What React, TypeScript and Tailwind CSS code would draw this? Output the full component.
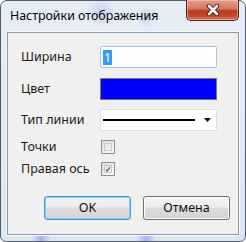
function CloseButton() {
  return (
    <div className="flex h-[21px] w-[53px] shrink-0 items-center justify-center rounded-b-[5px] border border-t-0 border-[#5e2318] bg-[linear-gradient(to_bottom,#e39c8b_0%,#d57a66_42%,#bb3b22_55%,#c24a30_80%,#d5826c_100%)] shadow-[inset_0_0_0_1px_rgba(255,220,210,0.45)]">
      <svg width="16" height="14" viewBox="0 0 16 14">
        <path d="M4 3 L12 11 M12 3 L4 11" stroke="#431510" strokeWidth="4.4" strokeLinecap="round" />
        <path d="M4 3 L12 11 M12 3 L4 11" stroke="#ffffff" strokeWidth="2.6" strokeLinecap="round" />
      </svg>
    </div>
  );
}

function CheckBox({ checked }: { checked?: boolean }) {
  return (
    <div className="flex h-[14px] w-[14px] items-center justify-center border border-[#8e8f8f] bg-[linear-gradient(135deg,#dcdcdc,#fbfbfb)] p-[2px]">
      <div className="flex h-full w-full items-center justify-center border border-[#c9c9c9] bg-[linear-gradient(135deg,#e0e0e0,#f7f7f7)]">
        {checked && (
          <svg width="9" height="9" viewBox="0 0 9 9">
            <path d="M1.5 4.5 L3.5 7 L7.5 1" stroke="#3a4f8e" strokeWidth="1.6" fill="none" />
          </svg>
        )}
      </div>
    </div>
  );
}

function Button({ label, primary }: { label: string; primary?: boolean }) {
  return (
    <div
      className={
        primary
          ? "flex h-[24px] w-[87px] items-center justify-center rounded-[3px] border border-[#3c9ad8] bg-[linear-gradient(to_bottom,#f4f4f4_0%,#ececec_45%,#dedede_50%,#d2d2d2_100%)] shadow-[inset_0_0_0_1px_#7fd3f7] text-[12.5px] text-[#111]"
          : "flex h-[24px] w-[87px] items-center justify-center rounded-[3px] border border-[#707070] bg-[linear-gradient(to_bottom,#f4f4f4_0%,#ececec_45%,#dedede_50%,#d2d2d2_100%)] shadow-[inset_0_0_0_1px_#fcfcfc] text-[12.5px] text-[#111]"
      }
    >
      {label}
    </div>
  );
}

export default function App() {
  return (
    <div className="h-[242px] w-[246px] bg-white font-['Noto_Sans','Open_Sans',sans-serif]">
      <div className="flex h-[242px] w-[246px] flex-col rounded-t-[7px] rounded-b-[6px] border border-[#4f5b68] bg-[radial-gradient(circle_at_100px_12px,#c4cdee_0,transparent_14px),radial-gradient(circle_at_145px_16px,#c2cbee_0,transparent_10px),radial-gradient(circle_at_40px_238px,#9fb0f0_0,transparent_10px),radial-gradient(circle_at_145px_238px,#9fb0f0_0,transparent_10px),linear-gradient(to_bottom,#e6edf5,#dde7f2)] px-[6px] pb-[6px]">
        <div className="flex h-[31px] items-start justify-between">
          <span className="pl-[3px] pt-[6px] text-[12.4px] leading-[18px] text-[#050505]">Настройки отображения</span>
          <div className="mt-[-1px]">
            <CloseButton />
          </div>
        </div>
        <div className="flex flex-1 flex-col border border-[#8b98a6] bg-[#f0f0f0] pl-[13px] pt-[13px] text-[12.5px] text-[#1a1a1a] shadow-[0_0_0_1px_#f6f9fc]">
          <div className="flex h-[22px] items-center">
            <span className="w-[79px]">Ширина</span>
            <div className="flex h-[22px] w-[117px] items-center rounded-[2px] border border-[#a7c6e2] bg-white pl-[2px]">
              <span className="bg-[#3399ff] px-[1px] leading-[15px] text-white">1</span>
            </div>
          </div>
          <div className="mt-[10px] flex h-[22px] items-center">
            <span className="w-[79px]">Цвет</span>
            <div className="h-[22px] w-[117px] border border-[#767676] bg-[#0000ff]" />
          </div>
          <div className="mt-[9px] flex h-[22px] items-center">
            <span className="w-[79px]">Тип линии</span>
            <div className="flex h-[22px] w-[117px] items-center rounded-[2px] border border-[#dedede] bg-white pl-[2px] pr-[5px]">
              <div className="h-[2px] w-[92px] bg-black" />
              <svg className="ml-auto" width="7" height="4" viewBox="0 0 7 4">
                <path d="M0 0 L7 0 L3.5 4 Z" fill="#111" />
              </svg>
            </div>
          </div>
          <div className="mt-[9px] flex h-[14px] items-center">
            <span className="w-[80px]">Точки</span>
            <CheckBox />
          </div>
          <div className="mt-[8px] flex h-[14px] items-center">
            <span className="w-[80px]">Правая ось</span>
            <CheckBox checked />
          </div>
          <div className="mt-[20px] flex gap-[12px] pl-[23px]">
            <Button label="OK" primary />
            <Button label="Отмена" />
          </div>
        </div>
      </div>
    </div>
  );
}
